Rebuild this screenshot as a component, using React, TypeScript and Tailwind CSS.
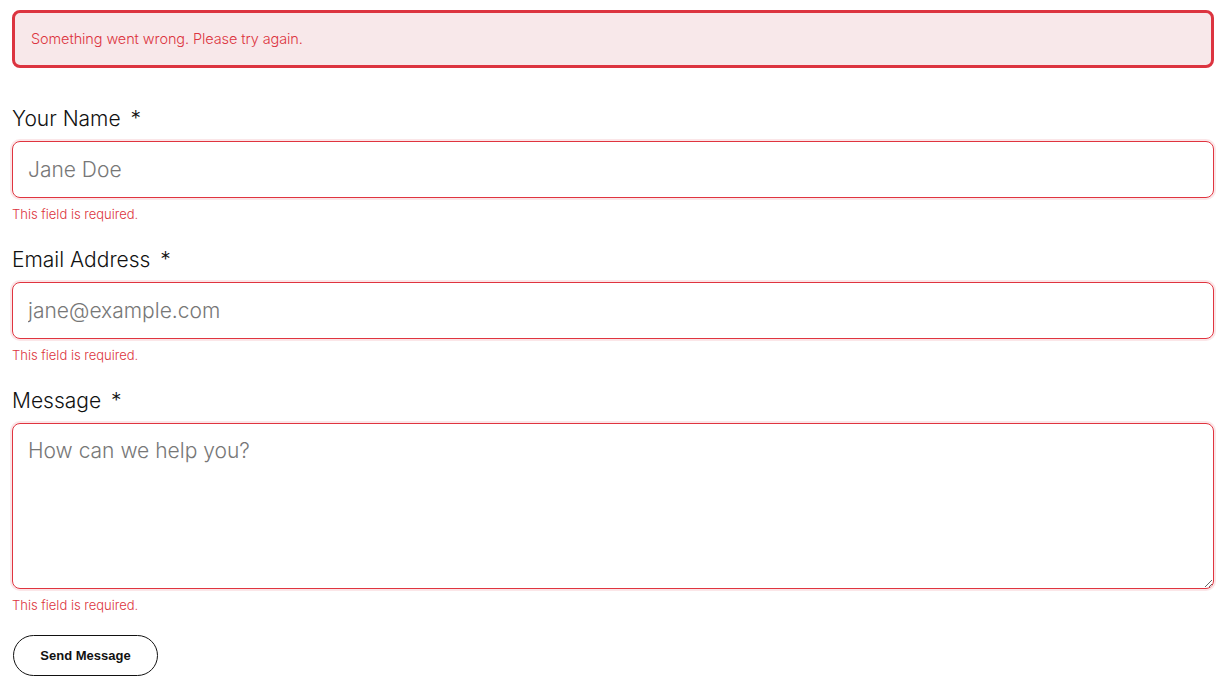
export default function App() {
  const font = { fontFamily: 'Inter, "Noto Sans", sans-serif' }

  return (
    <div className="min-h-screen bg-white px-3 pt-[10px] pr-[13px]" style={font}>
      {/* Alert */}
      <div className="flex h-[58px] items-center rounded-lg border-[3px] border-[#dc3440] bg-[#f8e8ea] px-[16px] text-[14.5px] font-light tracking-[-0.1px] text-[#dc3440]">
        Something went wrong. Please try again.
      </div>

      <form className="mt-[37px]" noValidate>
        {/* Name */}
        <label className="mb-[8px] block h-7 text-[21px] leading-7 font-light text-[#111]">
          Your Name <span className="ml-1">*</span>
        </label>
        <input
          type="text"
          placeholder="Jane Doe"
          className="block h-[57px] w-full rounded-lg border border-[#e0343f] px-[15px] text-[21px] font-light text-[#111] shadow-[0_0_0_2px_rgba(220,52,64,0.12)] outline-none placeholder:text-[#777]"
        />
        <p className="mt-[6px] h-5 text-[13px] leading-5 font-light text-[#dc3440]">This field is required.</p>

        {/* Email */}
        <label className="mt-[22px] mb-[8px] block h-7 text-[21px] leading-7 font-light text-[#111]">
          Email Address <span className="ml-1">*</span>
        </label>
        <input
          type="email"
          placeholder="jane@example.com"
          className="block h-[57px] w-full rounded-lg border border-[#e0343f] px-[15px] text-[21px] font-light text-[#111] shadow-[0_0_0_2px_rgba(220,52,64,0.12)] outline-none placeholder:text-[#777]"
        />
        <p className="mt-[6px] h-5 text-[13px] leading-5 font-light text-[#dc3440]">This field is required.</p>

        {/* Message */}
        <label className="mt-[22px] mb-[8px] block h-7 text-[21px] leading-7 font-light text-[#111]">
          Message <span className="ml-1">*</span>
        </label>
        <textarea
          placeholder="How can we help you?"
          className="block h-[166px] w-full rounded-lg border border-[#e0343f] px-[15px] py-[13px] text-[21px] leading-7 font-light text-[#111] shadow-[0_0_0_2px_rgba(220,52,64,0.12)] outline-none placeholder:text-[#777]"
        />
        <p className="mt-[6px] h-5 text-[13px] leading-5 font-light text-[#dc3440]">This field is required.</p>

        <button
          type="button"
          className="mt-[20px] ml-px h-[41px] w-[145px] rounded-full border border-[#111] bg-white text-[13px] font-bold text-[#111]"
          style={{ fontFamily: '"Liberation Sans", Arial, sans-serif' }}
        >
          Send Message
        </button>
      </form>
    </div>
  )
}
